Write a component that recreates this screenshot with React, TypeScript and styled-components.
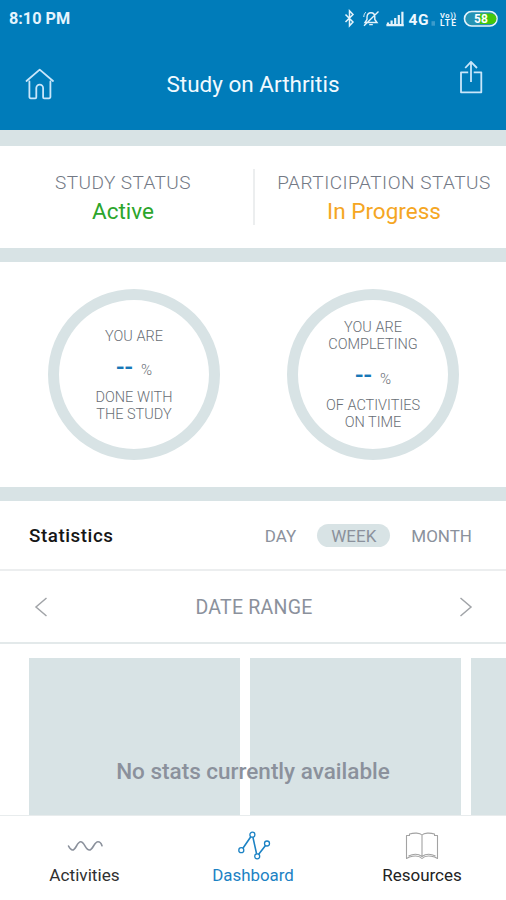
import React from "react";
import styled, { createGlobalStyle } from "styled-components";

const c = {
  blue: "#007cba",
  band: "#d8e3e5",
  grey: "#8b919c",
  line: "#eceeef",
};

const GlobalStyle = createGlobalStyle`
  * { box-sizing: border-box; }
  body { margin: 0; background: #fff; font-family: Roboto, "Liberation Sans", sans-serif; }
  button { font: inherit; border: 0; padding: 0; background: none; color: inherit; }
  svg { display: block; flex: none; }
`;

const Screen = styled.div`
  width: 506px;
  height: 900px;
  overflow: hidden;
  display: flex;
  flex-direction: column;
  background: #fff;
`;

const Text = styled.span<{ $size: number; $weight?: number; $color?: string; $track?: number; $line?: number }>`
  display: block;
  white-space: nowrap;
  font-size: ${(p) => p.$size}px;
  font-weight: ${(p) => p.$weight ?? 400};
  color: ${(p) => p.$color ?? c.grey};
  letter-spacing: ${(p) => p.$track ?? 0}px;
  line-height: ${(p) => p.$line ?? 24}px;
`;

const Header = styled.header`
  height: 130px;
  flex: none;
  background: ${c.blue};
  color: #fff;
`;

const StatusBar = styled.div`
  height: 38px;
  padding: 0 8px 0 9px;
  display: flex;
  align-items: center;
  justify-content: space-between;
`;

const TitleBar = styled.div`
  height: 92px;
  padding: 0 22px 0 25px;
  display: grid;
  grid-template-columns: 30px 396px 32px;
  align-items: center;
  justify-items: center;
`;

const IconButton = styled.button<{ $lift?: number }>`
  display: flex;
  justify-self: end;
  margin-bottom: ${(p) => p.$lift ?? 0}px;
`;

const Band = styled.div<{ $height: number }>`
  flex: none;
  height: ${(p) => p.$height}px;
  background: ${c.band};
`;

const StatusPanel = styled.section`
  flex: none;
  height: 102px;
  display: grid;
  grid-template-columns: 246px 2px 258px;
  padding-top: 23px;
`;

const StatusCell = styled.div<{ $pad: string }>`
  padding: ${(p) => p.$pad};
  display: flex;
  flex-direction: column;
  align-items: center;
  gap: 4px;
`;

const Divider = styled.div`
  width: 2px;
  height: 56px;
  margin-left: 7px;
  background: ${c.line};
`;

const Rings = styled.section`
  flex: none;
  height: 225px;
  padding: 27px 47px 0 48px;
  display: flex;
  justify-content: space-between;
`;

const Ring = styled.div`
  width: 172px;
  height: 171px;
  padding-top: 1px;
  border: 11px solid ${c.band};
  border-radius: 50%;
  display: flex;
  flex-direction: column;
  align-items: center;
  justify-content: center;
  text-align: center;
`;

const Percent = styled.div`
  display: flex;
  align-items: center;
  gap: 8px;
  height: 26px;
  margin: 10px 0 8px;
`;

const PercentSign = styled.div`
  padding-top: 5px;
`;

const StatsHeader = styled.section`
  flex: none;
  height: 70px;
  padding: 1px 34px 0 29px;
  display: flex;
  align-items: center;
  justify-content: space-between;
  border-bottom: 2px solid ${c.line};
`;

const Periods = styled.div`
  display: flex;
  align-items: center;
  gap: 21px;
`;

const Period = styled.button<{ $active?: boolean }>`
  height: 23px;
  padding: ${(p) => (p.$active ? "0 14px" : "0")};
  border-radius: 12px;
  background: ${(p) => (p.$active ? c.band : "transparent")};
`;

const RangeRow = styled.section`
  flex: none;
  height: 73px;
  padding: 1px 33px 0 34px;
  display: flex;
  align-items: center;
  justify-content: space-between;
  border-bottom: 2px solid #e3e9ea;
`;

const RangeLabel = styled.div`
  padding: 2px 0 0 1px;
`;

const Stats = styled.section`
  position: relative;
  flex: none;
  height: 171px;
  padding: 14px 0 0 29px;
  display: flex;
  gap: 10px;
  overflow: hidden;
`;

const StatTile = styled.div`
  flex: none;
  width: 211px;
  background: ${c.band};
`;

const Empty = styled.div`
  position: absolute;
  inset: 115px 0 auto;
  display: flex;
  justify-content: center;
`;

const Nav = styled.nav`
  flex: 1;
  border-top: 1px solid #e8eced;
  display: grid;
  grid-template-columns: 169px 168px 170px;
  background: #fff;
`;

const NavItem = styled.button`
  display: flex;
  flex-direction: column;
  align-items: center;
  padding-top: 13px;
`;

const NavIcon = styled.span`
  height: 34px;
  display: flex;
  align-items: center;
`;

const StatusIcons = () => (
  <svg width="154" height="20" viewBox="0 0 154 20" fill="none" stroke="#e5f3fb">
    <path d="M1.5 5.5 9 13 5.5 16.8V1.8L9 5.500 1.500 13" strokeWidth="1.5" />
    <g strokeWidth="1.4">
      <path d="M21 13.500h12l-2.200-3V8c0-2.800-1.300-4.300-3.800-4.300S23.200 5.200 23 8v2.500zM25.200 15.600h3.600M34.500 2.500 20 16.800" />
      <path d="M19.800 8c0-2 .8-3.600 2-4.800" strokeWidth="1" />
    </g>
    <path d="M42.400 16.200h17.400M44 16v-2.500M47.600 16v-4.500M51.200 16V9M54.800 16V6M58.400 16V2.800" strokeWidth="2.200" />
    <g fill="#eef8ff" stroke="none" fontFamily="Roboto, sans-serif" fontWeight="700">
      <text x="64.500" y="16.200" fontSize="15.500" textLength="20">4G</text>
      <rect x="87.500" y="12.200" width="3.500" height="4.500" opacity=".25" />
      <text x="96" y="8.500" fontSize="7.500" textLength="16">Vo))</text>
      <text x="96" y="17" fontSize="8.500" textLength="16">LTE</text>
    </g>
    <rect x="120.500" y="2.500" width="32.500" height="14.500" rx="7.200" fill="#2593b4" strokeWidth="1.600" />
    <path d="M136 4.500h11.200a5.200 5.200 0 0 1 0 10.500H136z" fill="#43c70b" stroke="none" />
    <text x="130" y="14.200" fontSize="12" fontWeight="700" fill="#fff" stroke="none" fontFamily="Roboto, sans-serif" textLength="14">58</text>
  </svg>
);

const HomeIcon = () => (
  <svg width="30" height="32" viewBox="0 0 30 32" fill="none" stroke="#c9e6fa" strokeWidth="1.8" strokeLinejoin="round" strokeLinecap="round">
    <path d="M1.500 13 14.700 1.600 28 13M4.400 13.500V29a1.300 1.300 0 0 0 1.300 1.300h4.600a1 1 0 0 0 1-1V20a3.300 3.300 0 0 1 6.800 0v9.300a1 1 0 0 0 1 1h5a1.300 1.300 0 0 0 1.300-1.300V13.500" />
  </svg>
);

const ShareIcon = () => (
  <svg width="24" height="34" viewBox="0 0 24 34" fill="none" stroke="#c9e6fa" strokeWidth="1.8" strokeLinejoin="round">
    <path d="M9.200 12.300H2v20h20.300v-20h-7.600M12 22V2M6.200 8 12 1.800 18 8" />
  </svg>
);

const Chevron = ({ right }: { right?: boolean }) => (
  <svg width="14" height="20" viewBox="0 0 14 20" fill="none" stroke="#a1a4a8" strokeWidth="1.500">
    <path d={right ? "M1.500 1 12 10 1.500 19" : "M12.500 1 2 10 12.500 19"} />
  </svg>
);

const WaveIcon = () => (
  <svg width="36" height="12" viewBox="0 0 36 12" fill="none" stroke="#8b919c" strokeWidth="1.600" strokeLinecap="round">
    <path d="M1.500 6C3 9 4 10 5.500 10 9 10 10 1.800 13.700 1.800S18.500 10 22.300 10 27 1.800 31 1.800c2 0 3.200 1.400 4 4" />
  </svg>
);

const GraphIcon = () => (
  <svg width="36" height="30" viewBox="0 0 36 30" fill="none" stroke="#1b82c4" strokeWidth="1.300">
    <path d="m7.900 17.200 7.900-11.400M17.900 6.200l3.700 16.600M23.700 23.200l6.800-8.700" strokeWidth="1.600" />
    <circle cx="6.300" cy="19.200" r="2.500" /><circle cx="17.400" cy="3.700" r="2.500" />
    <circle cx="22.200" cy="25.300" r="2.500" /><circle cx="32" cy="12.500" r="2.500" />
  </svg>
);

const BookIcon = () => (
  <svg width="34" height="28" viewBox="0 0 34 28" fill="none" stroke="#a3a3a3" strokeWidth="1.100" strokeLinejoin="round">
    <path d="M17 3C15 .8 9 .6 4.500 2v1.500H1.500V26.500l3-1.500M17 3c2-2.200 8-2.400 12.500-1v1.500h3V26.500l-3-1.500M17 3V24M4.500 25c4.500-1.400 10-1.200 12.500 1.500 2.500-2.700 8-2.900 12.500-1.500M3.500 24c4.500-2.200 10-2.200 13.500.5 3.500-2.700 9-2.700 13.500-.5" />
  </svg>
);

const Progress = ({ above, below }: { above: string[]; below: string[] }) => (
  <Ring>
    {above.map((t) => <Text key={t} $size={14.5} $weight={300} $line={17} $color="#686e75">{t}</Text>)}
    <Percent>
      <Text $size={25} $weight={500} $color="#1877b7">--</Text>
      <PercentSign><Text $size={15} $weight={300} $color="#686e75">%</Text></PercentSign>
    </Percent>
    {below.map((t) => <Text key={t} $size={14.5} $weight={300} $line={17} $color="#686e75">{t}</Text>)}
  </Ring>
);

export default function App() {
  return (
    <Screen>
      <GlobalStyle />
      <Header>
        <StatusBar>
          <Text $size={16.2} $weight={700} $color="#e5f4fd">8:10 PM</Text>
          <StatusIcons />
        </StatusBar>
        <TitleBar>
          <IconButton aria-label="Home"><HomeIcon /></IconButton>
          <Text $size={22.5} $color="#f1faff">Study on Arthritis</Text>
          <IconButton aria-label="Share" $lift={14}><ShareIcon /></IconButton>
        </TitleBar>
      </Header>
      <Band $height={16} />
      <StatusPanel>
        <StatusCell $pad="2px 0 0">
          <Text $size={19} $weight={300} $track={0.42} $color="#737985">STUDY STATUS</Text>
          <Text $size={22.5} $color="#2ca52c">Active</Text>
        </StatusCell>
        <Divider />
        <StatusCell $pad="2px 0 0 14px">
          <Text $size={19} $weight={300} $track={0.5} $color="#737985">PARTICIPATION STATUS</Text>
          <Text $size={22.5} $color="#f5a623">In Progress</Text>
        </StatusCell>
      </StatusPanel>
      <Band $height={14} />
      <Rings>
        <Progress above={["YOU ARE"]} below={["DONE WITH", "THE STUDY"]} />
        <Progress above={["YOU ARE", "COMPLETING"]} below={["OF ACTIVITIES", "ON TIME"]} />
      </Rings>
      <Band $height={14} />
      <StatsHeader>
        <Text $size={18.8} $weight={500} $track={0.55} $color="#161616">Statistics</Text>
        <Periods>
          <Period><Text $size={17}>DAY</Text></Period>
          <Period $active><Text $size={17}>WEEK</Text></Period>
          <Period><Text $size={17}>MONTH</Text></Period>
        </Periods>
      </StatsHeader>
      <RangeRow>
        <button aria-label="Previous"><Chevron /></button>
        <RangeLabel><Text $size={19.5} $track={0.25}>DATE RANGE</Text></RangeLabel>
        <button aria-label="Next"><Chevron right /></button>
      </RangeRow>
      <Stats>
        <StatTile /><StatTile /><StatTile />
        <Empty><Text $size={22.5} $weight={500}>No stats currently available</Text></Empty>
      </Stats>
      <Nav>
        <NavItem><NavIcon><WaveIcon /></NavIcon><Text $size={17.2} $color="#303030">Activities</Text></NavItem>
        <NavItem><NavIcon><GraphIcon /></NavIcon><Text $size={16.9} $color="#1b82c4">Dashboard</Text></NavItem>
        <NavItem><NavIcon><BookIcon /></NavIcon><Text $size={17} $color="#222">Resources</Text></NavItem>
      </Nav>
    </Screen>
  );
}
